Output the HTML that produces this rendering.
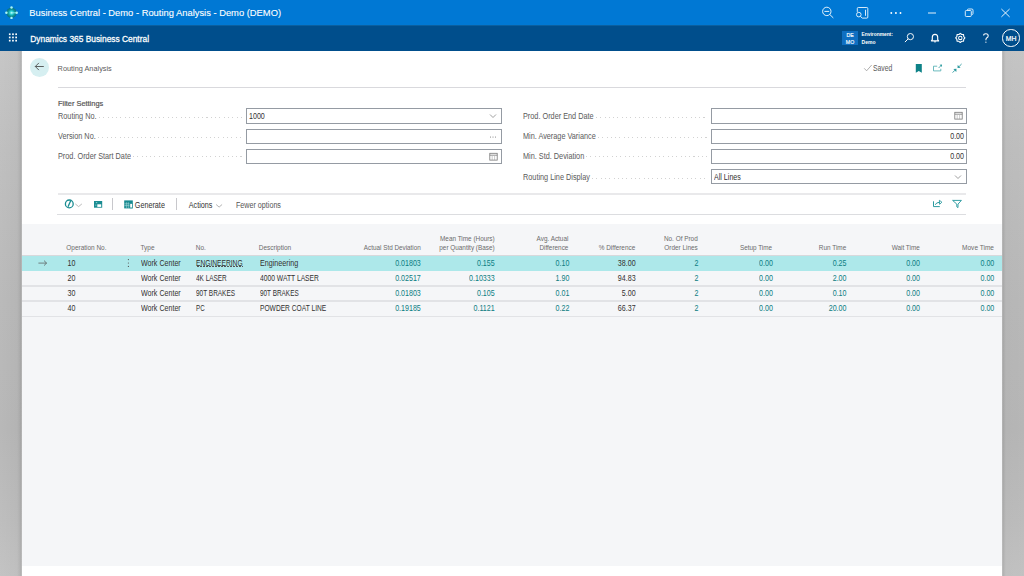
<!DOCTYPE html>
<html><head><meta charset="utf-8">
<style>
*{box-sizing:border-box;margin:0;padding:0}
html,body{width:1024px;height:576px;overflow:hidden;background:#fff;font-family:"Liberation Sans",sans-serif}
.a{position:absolute;white-space:nowrap}
#title{left:0;top:0;width:1024px;height:25px;background:#0078d4}
#nav{left:0;top:25px;width:1024px;height:26px;background:linear-gradient(#0b5f9f 0,#0b5f9f 1px,#004e8c 1px)}
#lm{left:0;top:51px;width:22px;height:525px;background:linear-gradient(to right,rgba(255,255,255,0.06) 0,rgba(255,255,255,0) 17px,rgba(0,0,0,0.06) 20px,rgba(0,0,0,0.1) 21.3px,rgba(255,255,255,0.5) 22px),linear-gradient(#c3c3c3 0,#bcbcbc 100px,#b6b6b6 250px,#b4b4b4 380px,#bababa 470px,#c0c0c0 525px)}
#rm{left:1002px;top:51px;width:22px;height:525px;background:linear-gradient(to right,rgba(255,255,255,0.5) 0,rgba(0,0,0,0.1) 0.7px,rgba(0,0,0,0.05) 2px,rgba(0,0,0,0) 4px,rgba(255,255,255,0.03) 22px),linear-gradient(#c3c3c3 0,#bcbcbc 100px,#b6b6b6 250px,#b4b4b4 380px,#bababa 470px,#c0c0c0 525px)}
#list{left:22px;top:224px;width:980px;height:342px;background:#f5f6f8}
.tt{color:#fff;font-size:9.37px}
.lbl{font-size:7.3px;color:#505050;line-height:10px}
.dl{height:1px;background:repeating-linear-gradient(to right,#d2d2d2 0 1px,transparent 1px 4.3px)}
.inp{border:1px solid #959ba3;background:#fff;height:15px}
.hd{font-size:6.4px;color:#6b6b6b;line-height:9.3px}
.cell{font-size:7.1px;color:#323130;line-height:10px}
.r{text-align:right}
.row{left:22px;width:980px;border-bottom:1px solid #e2e3e6}
.ic{position:absolute}
</style></head><body>
<div id="title" class="a"></div><div id="nav" class="a"></div>
<div id="lm" class="a"></div><div id="rm" class="a"></div>
<div class="a" style="top:8px;font-size:9.37px;color:#fff;line-height:10px;left:29.30px;-webkit-text-stroke:0.1px #fff;">Business Central - Demo - Routing Analysis - Demo (DEMO)</div>
<div class="a" style="top:34px;font-size:8.4px;color:#fff;line-height:10px;left:30.30px;transform-origin:0 8px;transform:scale(1.0000,1.1);-webkit-text-stroke:0.25px #fff;">Dynamics 365 Business Central</div>
<div class="a" style="left:30px;top:58px;width:19px;height:19px;border-radius:50%;background:#d6eff1"></div>
<div class="a" style="top:64px;font-size:7.33px;color:#5a5a5a;line-height:10px;left:57.60px;transform-origin:0 7px;transform:scale(1.0000,1.1);">Routing Analysis</div>
<div class="a" style="left:57.6px;top:87px;width:908.4px;height:1px;background:#d9d9dd"></div>
<div class="a" style="top:64px;font-size:6.81px;color:#5a5a5a;line-height:10px;left:873.00px;transform-origin:0 7px;transform:scale(1.0000,1.25);">Saved</div>
<div class="a" style="top:99px;font-size:7.4px;color:#555;line-height:10px;left:58.00px;-webkit-text-stroke:0.2px #555;">Filter Settings</div>
<div class="a" style="top:112px;font-size:7.3px;color:#5a5a5a;line-height:10px;left:58.00px;transform-origin:0 7px;transform:scale(1.0000,1.12);">Routing No.</div>
<div class="a dl" style="left:98.5px;top:116.5px;width:143.5px"></div>
<div class="a inp" style="left:246px;top:108px;width:256px;height:16px"></div>
<div class="a" style="top:112px;font-size:7.1px;color:#323130;line-height:10px;left:249.00px;transform-origin:0 7px;transform:scale(1.0000,1.15);">1000</div>
<svg class="ic" style="left:489px;top:113px" width="8" height="6" viewBox="0 0 8 6"><path d="M1 1.5 L4 4.5 L7 1.5" fill="none" stroke="#777" stroke-width="0.7"/></svg>
<div class="a" style="top:132px;font-size:7.3px;color:#5a5a5a;line-height:10px;left:58.00px;transform-origin:0 7px;transform:scale(1.0000,1.12);">Version No.</div>
<div class="a dl" style="left:97.7px;top:136.5px;width:144.3px"></div>
<div class="a inp" style="left:246px;top:128.8px;width:256px;height:15px"></div>
<svg class="ic" style="left:489px;top:134.8px" width="8" height="4" viewBox="0 0 8 4"><circle cx="1.5" cy="2" r="0.5" fill="#666"/><circle cx="4" cy="2" r="0.5" fill="#666"/><circle cx="6.5" cy="2" r="0.5" fill="#666"/></svg>
<div class="a" style="top:152px;font-size:7.3px;color:#5a5a5a;line-height:10px;left:58.00px;transform-origin:0 7px;transform:scale(1.0000,1.12);">Prod. Order Start Date</div>
<div class="a dl" style="left:133.0px;top:156.3px;width:109.0px"></div>
<div class="a inp" style="left:246px;top:149px;width:256px;height:15px"></div>
<svg class="ic" style="left:489px;top:152px" width="9" height="9" viewBox="0 0 9 9"><rect x="0.8" y="1.3" width="7.4" height="6.8" fill="none" stroke="#777" stroke-width="0.8"/><line x1="0.8" y1="3.2" x2="8.2" y2="3.2" stroke="#777" stroke-width="0.8"/><line x1="3.2" y1="4" x2="3.2" y2="8" stroke="#999" stroke-width="0.5"/><line x1="5.6" y1="4" x2="5.6" y2="8" stroke="#999" stroke-width="0.5"/></svg>
<div class="a" style="top:112px;font-size:7.3px;color:#5a5a5a;line-height:10px;left:523.00px;transform-origin:0 7px;transform:scale(1.0000,1.12);">Prod. Order End Date</div>
<div class="a dl" style="left:595.6px;top:116.5px;width:111.4px"></div>
<div class="a inp" style="left:711px;top:108px;width:256px;height:16px"></div>
<svg class="ic" style="left:954px;top:111px" width="9" height="9" viewBox="0 0 9 9"><rect x="0.8" y="1.3" width="7.4" height="6.8" fill="none" stroke="#777" stroke-width="0.8"/><line x1="0.8" y1="3.2" x2="8.2" y2="3.2" stroke="#777" stroke-width="0.8"/><line x1="3.2" y1="4" x2="3.2" y2="8" stroke="#999" stroke-width="0.5"/><line x1="5.6" y1="4" x2="5.6" y2="8" stroke="#999" stroke-width="0.5"/></svg>
<div class="a" style="top:132px;font-size:7.3px;color:#5a5a5a;line-height:10px;left:523.00px;transform-origin:0 7px;transform:scale(1.0000,1.12);">Min. Average Variance</div>
<div class="a dl" style="left:597.8px;top:136.5px;width:109.2px"></div>
<div class="a inp" style="left:711px;top:128.8px;width:256px;height:15px"></div>
<div class="a" style="top:132px;font-size:7.1px;color:#323130;line-height:10px;right:60.00px;text-align:right;transform-origin:100% 7px;transform:scale(1.0000,1.15);">0.00</div>
<div class="a" style="top:152px;font-size:7.3px;color:#5a5a5a;line-height:10px;left:523.00px;transform-origin:0 7px;transform:scale(1.0000,1.12);">Min. Std. Deviation</div>
<div class="a dl" style="left:586.3px;top:156.3px;width:120.7px"></div>
<div class="a inp" style="left:711px;top:149px;width:256px;height:15px"></div>
<div class="a" style="top:152px;font-size:7.1px;color:#323130;line-height:10px;right:60.00px;text-align:right;transform-origin:100% 7px;transform:scale(1.0000,1.15);">0.00</div>
<div class="a" style="top:173px;font-size:7.3px;color:#5a5a5a;line-height:10px;left:523.00px;transform-origin:0 7px;transform:scale(1.0000,1.12);">Routing Line Display</div>
<div class="a dl" style="left:592.0px;top:177.5px;width:115.0px"></div>
<div class="a inp" style="left:711px;top:169px;width:256px;height:15px"></div>
<div class="a" style="top:173px;font-size:7.1px;color:#323130;line-height:10px;left:714.00px;transform-origin:0 7px;transform:scale(1.0000,1.15);">All Lines</div>
<svg class="ic" style="left:954px;top:174px" width="8" height="6" viewBox="0 0 8 6"><path d="M1 1.5 L4 4.5 L7 1.5" fill="none" stroke="#777" stroke-width="0.7"/></svg>
<div class="a" style="left:57.6px;top:193px;width:908.4px;height:2px;background:#e9e9eb"></div>
<div class="a" style="left:57.4px;top:214px;width:908.6px;height:1px;background:#dcdde0"></div>
<div class="a" style="left:112px;top:198px;width:1px;height:12px;background:#c8c8cc"></div>
<div class="a" style="left:176px;top:198px;width:1px;height:12px;background:#c8c8cc"></div>
<div class="a" style="top:201px;font-size:7.22px;color:#323130;line-height:10px;left:134.80px;transform-origin:0 7px;transform:scale(1.0000,1.15);">Generate</div>
<div class="a" style="top:201px;font-size:7.2px;color:#323130;line-height:10px;left:188.80px;transform-origin:0 7px;transform:scale(1.0000,1.15);">Actions</div>
<div class="a" style="top:201px;font-size:7.16px;color:#555;line-height:10px;left:236.00px;transform-origin:0 7px;transform:scale(1.0000,1.15);">Fewer options</div>
<div class="a" style="left:4.5px;top:5.3px;width:13px;height:13px"><svg width="13" height="13" viewBox="0 0 13 13"><defs><radialGradient id="lg" cx="50%" cy="50%" r="50%"><stop offset="0" stop-color="#c8ffff"/><stop offset="0.3" stop-color="#30d6da"/><stop offset="0.6" stop-color="#0f9aa0"/><stop offset="1" stop-color="#0b6f76"/></radialGradient></defs><circle cx="6.5" cy="6.8" r="5.1" fill="url(#lg)"/><line x1="6.5" y1="6.8" x2="11.5" y2="6.8" stroke="#a8f5f5" stroke-width="0.7"/><circle cx="6.5" cy="1.6" r="1.25" fill="#a8f5f5"/><circle cx="6.5" cy="12" r="1.25" fill="#a8f5f5"/><circle cx="1.4" cy="6.8" r="1.25" fill="#a8f5f5"/><circle cx="11.7" cy="6.8" r="1.25" fill="#a8f5f5"/></svg></div>
<svg class="ic" style="left:818px;top:4px" width="18" height="17" viewBox="818 4 18 17"><circle cx="826.8" cy="11.4" r="4.2" fill="none" stroke="#fff" stroke-width="0.9"/><line x1="824.4" y1="11.4" x2="829.2" y2="11.4" stroke="#fff" stroke-width="0.9"/><line x1="829.9" y1="14.6" x2="833.3" y2="17.9" stroke="#fff" stroke-width="0.9"/></svg>
<svg class="ic" style="left:852px;top:4px" width="20" height="18" viewBox="852 4 20 18"><path d="M857.3 11.9 V8.5 Q857.3 7.5 858.3 7.5 H866.8 Q867.8 7.5 867.8 8.5 V17.1 Q867.8 18.1 866.8 18.1 H862.3" fill="none" stroke="#fff" stroke-width="0.85"/><line x1="865.5" y1="9.8" x2="865.5" y2="15.8" stroke="#fff" stroke-width="0.85"/><circle cx="858.8" cy="14.6" r="2.3" fill="none" stroke="#fff" stroke-width="0.85"/><line x1="860.5" y1="16.3" x2="862.2" y2="18.2" stroke="#fff" stroke-width="0.85"/></svg>
<svg class="ic" style="left:888px;top:10px" width="16" height="6" viewBox="888 10 16 6"><circle cx="891.3" cy="13" r="0.95" fill="#fff"/><circle cx="895.9" cy="13" r="0.95" fill="#fff"/><circle cx="900.5" cy="13" r="0.95" fill="#fff"/></svg>
<svg class="ic" style="left:926px;top:10px" width="12" height="6" viewBox="926 10 12 6"><line x1="928" y1="13" x2="936" y2="13" stroke="#fff" stroke-width="0.9"/></svg>
<svg class="ic" style="left:962px;top:6px" width="14" height="14" viewBox="962 6 14 14"><path d="M967.2 9.9 Q967.6 9 968.6 9 H971.8 Q973 9 973 10.2 V13.5 Q973 14.4 972.2 14.7" fill="none" stroke="#fff" stroke-width="0.85"/><rect x="965.3" y="10.5" width="6" height="6" rx="1" fill="none" stroke="#fff" stroke-width="0.85"/></svg>
<svg class="ic" style="left:998px;top:6px" width="14" height="14" viewBox="998 6 14 14"><path d="M1001.4 9 L1009.6 16.9 M1009.6 9 L1001.4 16.9" stroke="#fff" stroke-width="0.9"/></svg>
<svg class="ic" style="left:6px;top:30px" width="16" height="16" viewBox="6 30 16 16"><rect x="8.9" y="33.4" width="1.7" height="1.7" fill="#fff"/><rect x="8.9" y="36.6" width="1.7" height="1.7" fill="#fff"/><rect x="8.9" y="39.8" width="1.7" height="1.7" fill="#fff"/><rect x="12.1" y="33.4" width="1.7" height="1.7" fill="#fff"/><rect x="12.1" y="36.6" width="1.7" height="1.7" fill="#fff"/><rect x="12.1" y="39.8" width="1.7" height="1.7" fill="#fff"/><rect x="15.3" y="33.4" width="1.7" height="1.7" fill="#fff"/><rect x="15.3" y="36.6" width="1.7" height="1.7" fill="#fff"/><rect x="15.3" y="39.8" width="1.7" height="1.7" fill="#fff"/></svg>
<div class="a" style="left:842.2px;top:30.9px;width:15.5px;height:14.6px;background:#0f6fc2"></div>
<div class="a" style="top:32px;font-size:5.2px;color:#fff;line-height:6px;left:850.00px;transform-origin:0 5px;transform:translateX(-50%) scale(1.0000,1.1);-webkit-text-stroke:0.15px #fff;">DE</div>
<div class="a" style="top:39px;font-size:5.2px;color:#fff;line-height:6px;left:850.00px;transform-origin:0 5px;transform:translateX(-50%) scale(1.0000,1.1);-webkit-text-stroke:0.15px #fff;">MO</div>
<div class="a" style="top:32px;font-size:4.85px;color:#fff;line-height:6px;font-weight:bold;left:861.60px;">Environment:</div>
<div class="a" style="top:39px;font-size:5.04px;color:#fff;line-height:6px;font-weight:bold;left:861.60px;">Demo</div>
<svg class="ic" style="left:902px;top:30px" width="14" height="14" viewBox="902 30 14 14"><circle cx="910.4" cy="36.6" r="3.1" fill="none" stroke="#fff" stroke-width="0.95"/><line x1="908.2" y1="38.8" x2="904.9" y2="42.1" stroke="#fff" stroke-width="1"/></svg>
<svg class="ic" style="left:928px;top:31px" width="14" height="14" viewBox="928 31 14 14"><path d="M931.4 40.9 H938.6 L937.7 39.6 V37.3 Q937.7 34.3 935 34.3 Q932.3 34.3 932.3 37.3 V39.6 Z" fill="none" stroke="#fff" stroke-width="1.15" stroke-linejoin="round"/><path d="M934 41.5 Q935 42.8 936 41.5" fill="none" stroke="#fff" stroke-width="0.9"/></svg>
<svg class="ic" style="left:954px;top:31px" width="14" height="14" viewBox="954 31 14 14"><polygon points="964.90,37.90 963.72,39.32 963.55,41.15 961.72,41.32 960.30,42.50 958.88,41.32 957.05,41.15 956.88,39.32 955.70,37.90 956.88,36.48 957.05,34.65 958.88,34.48 960.30,33.30 961.72,34.48 963.55,34.65 963.72,36.48" fill="none" stroke="#fff" stroke-width="1.1" stroke-linejoin="round"/><circle cx="960.3" cy="37.9" r="1.7" fill="none" stroke="#fff" stroke-width="1.05"/></svg>
<svg class="ic" style="left:980px;top:31px" width="12" height="14" viewBox="980 31 12 14"><path d="M983.6 35.6 Q983.6 33.7 985.9 33.7 Q988.2 33.7 988.2 35.7 Q988.2 37 986.9 37.8 Q985.9 38.4 985.9 39.8 V40.3" fill="none" stroke="#fff" stroke-width="1.05"/><circle cx="985.9" cy="42.2" r="0.6" fill="#fff"/></svg>
<div class="a" style="left:1002.4px;top:29.2px;width:17.4px;height:17.4px;border:1px solid #fff;border-radius:50%"></div>
<div class="a" style="top:35px;font-size:6.8px;color:#fff;line-height:8px;left:1011.10px;transform-origin:0 6px;transform:translateX(-50%) scale(1.0000,1.05);-webkit-text-stroke:0.2px #fff;">MH</div>
<svg class="ic" style="left:33px;top:60px" width="13" height="13" viewBox="33 60 13 13"><path d="M43.8 66.5 H35.3 M38.9 62.9 L35.3 66.5 L38.9 70.1" fill="none" stroke="#444" stroke-width="0.85"/></svg>
<svg class="ic" style="left:862px;top:63px" width="12" height="10" viewBox="862 63 12 10"><path d="M864.2 68.3 L866.6 70.8 L871.7 65.0" fill="none" stroke="#999" stroke-width="0.8"/></svg>
<svg class="ic" style="left:914px;top:62px" width="10" height="12" viewBox="914 62 10 12"><path d="M915.8 64 H921.8 V72.7 L918.8 71.0 L915.8 72.7 Z" fill="#0e8288"/></svg>
<svg class="ic" style="left:931px;top:62px" width="13" height="12" viewBox="931 62 13 12"><path d="M937.2 66.2 H933.5 V70.9 H940.8 V68.8" fill="none" stroke="#48a9ad" stroke-width="0.8"/><path d="M938.6 68.0 L941.3 65.3" fill="none" stroke="#2a9a9f" stroke-width="0.8"/><path d="M939.6 64.8 L942 64.6 L941.8 67 Z" fill="#2a9a9f"/></svg>
<svg class="ic" style="left:950px;top:62px" width="14" height="13" viewBox="950 62 14 13"><path d="M961.6 64 L959.2 66.4" fill="none" stroke="#2a9a9f" stroke-width="0.9"/><path d="M957.5 68.0 L957.7 64.9 L960.6 67.8 Z" fill="#2a9a9f"/><path d="M952.6 72.6 L955.0 70.2" fill="none" stroke="#2a9a9f" stroke-width="0.9"/><path d="M956.5 68.8 L956.3 71.9 L953.4 69.0 Z" fill="#2a9a9f"/></svg>
<svg class="ic" style="left:63px;top:198px" width="12" height="12" viewBox="63 198 12 12"><circle cx="69.3" cy="203.9" r="3.9" fill="none" stroke="#1a8c92" stroke-width="1.3"/><path d="M68.0 206.8 L70.6 201.0" stroke="#1a8c92" stroke-width="1.3"/></svg>
<svg class="ic" style="left:74px;top:201px" width="9" height="7" viewBox="74 201 9 7"><path d="M75.3 203.9 L78.6 206.6 L81.9 203.9" fill="none" stroke="#aaa" stroke-width="0.8"/></svg>
<svg class="ic" style="left:92px;top:199px" width="12" height="11" viewBox="92 199 12 11"><rect x="94" y="201" width="8.2" height="6.7" fill="#1a8c92"/><rect x="95.9" y="202.1" width="1.3" height="1" fill="#8fcfd2"/><rect x="97.3" y="204.3" width="3.9" height="2.6" fill="#fff"/><rect x="95.2" y="204.4" width="1.2" height="1.6" fill="#5fb5b9"/></svg>
<svg class="ic" style="left:122px;top:198px" width="13" height="12" viewBox="122 198 13 12"><rect x="124.2" y="200.4" width="8.6" height="8.0" fill="#178a90"/><path d="M126.4 202.2 V208.2 M128.3 202.2 V208.2 M124.4 203.8 H129.8 M124.4 205.6 H129.8" stroke="#bfe3e4" stroke-width="0.5"/><rect x="129.9" y="203.6" width="2.5" height="4.3" fill="#fff" stroke="#178a90" stroke-width="0.6"/></svg>
<svg class="ic" style="left:214px;top:203px" width="9" height="7" viewBox="214 203 9 7"><path d="M216.1 204.5 L219.1 207.1 L222.1 204.5" fill="none" stroke="#999" stroke-width="0.75"/></svg>
<svg class="ic" style="left:930px;top:197px" width="14" height="12" viewBox="930 197 14 12"><path d="M933.5 201.3 V206.6 H939.8" fill="none" stroke="#2a9a9f" stroke-width="1"/><path d="M935.3 204.8 Q936 202.5 939.4 202.3" fill="none" stroke="#2a9a9f" stroke-width="1"/><path d="M939.4 200.3 L941.9 202.2 L939.6 204.3 Z" fill="none" stroke="#2a9a9f" stroke-width="0.9" stroke-linejoin="round"/></svg>
<svg class="ic" style="left:951px;top:197px" width="13" height="13" viewBox="951 197 13 13"><path d="M952.6 200.4 H961.4 L958.0 204.1 V207.6 L956.8 206.8 V204.1 Z" fill="none" stroke="#2a9a9f" stroke-width="0.95" stroke-linejoin="round"/></svg>
<div id="list" class="a"></div>
<div class="a" style="top:243px;font-size:6.46px;color:#6b6b6b;line-height:10px;left:66.30px;">Operation No.</div>
<div class="a" style="top:243px;font-size:6.46px;color:#6b6b6b;line-height:10px;left:140.50px;">Type</div>
<div class="a" style="top:243px;font-size:6.46px;color:#6b6b6b;line-height:10px;left:195.80px;">No.</div>
<div class="a" style="top:243px;font-size:6.46px;color:#6b6b6b;line-height:10px;left:258.80px;">Description</div>
<div class="a" style="top:243px;font-size:6.34px;color:#6b6b6b;line-height:10px;right:603.20px;text-align:right;">Actual Std Deviation</div>
<div class="a" style="top:234px;font-size:6.4px;color:#6b6b6b;line-height:10px;right:529.30px;text-align:right;">Mean Time (Hours)</div>
<div class="a" style="top:243px;font-size:6.4px;color:#6b6b6b;line-height:10px;right:529.30px;text-align:right;">per Quantity (Base)</div>
<div class="a" style="top:234px;font-size:6.4px;color:#6b6b6b;line-height:10px;right:455.60px;text-align:right;">Avg. Actual</div>
<div class="a" style="top:243px;font-size:6.4px;color:#6b6b6b;line-height:10px;right:455.60px;text-align:right;">Difference</div>
<div class="a" style="top:243px;font-size:6.4px;color:#6b6b6b;line-height:10px;right:388.80px;text-align:right;">% Difference</div>
<div class="a" style="top:234px;font-size:6.4px;color:#6b6b6b;line-height:10px;right:326.30px;text-align:right;">No. Of Prod</div>
<div class="a" style="top:243px;font-size:6.4px;color:#6b6b6b;line-height:10px;right:326.30px;text-align:right;">Order Lines</div>
<div class="a" style="top:243px;font-size:6.35px;color:#6b6b6b;line-height:10px;right:252.00px;text-align:right;">Setup Time</div>
<div class="a" style="top:243px;font-size:6.4px;color:#6b6b6b;line-height:10px;right:177.80px;text-align:right;">Run Time</div>
<div class="a" style="top:243px;font-size:6.4px;color:#6b6b6b;line-height:10px;right:104.20px;text-align:right;">Wait Time</div>
<div class="a" style="top:243px;font-size:6.54px;color:#6b6b6b;line-height:10px;right:30.00px;text-align:right;">Move Time</div>
<div class="a" style="left:22px;top:255.5px;width:980px;height:15.2px;background:#ade8ea"></div>
<div class="a" style="top:259px;font-size:7.1px;color:#323130;line-height:10px;left:67.50px;transform-origin:0 7px;transform:scale(1.0000,1.15);">10</div>
<div class="a" style="top:259px;font-size:7.1px;color:#323130;line-height:10px;left:141.00px;transform-origin:0 7px;transform:scale(1.0000,1.15);">Work Center</div>
<div class="a" style="top:259px;font-size:7.1px;color:#323130;line-height:10px;left:196.10px;transform-origin:0 7px;transform:scale(0.9375,1.15);">ENGINEERING</div>
<div class="a" style="left:196.5px;top:266px;width:46px;height:1px;background:repeating-linear-gradient(to right,#555 0 1.5px,transparent 1.5px 3px)"></div>
<div class="a" style="top:259px;font-size:7.1px;color:#323130;line-height:10px;left:259.70px;transform-origin:0 7px;transform:scale(1.0107,1.15);">Engineering</div>
<div class="a" style="top:259px;font-size:7.1px;color:#0c7d82;line-height:10px;right:603.20px;text-align:right;transform-origin:100% 7px;transform:scale(1.0000,1.15);">0.01803</div>
<div class="a" style="top:259px;font-size:7.1px;color:#0c7d82;line-height:10px;right:529.30px;text-align:right;transform-origin:100% 7px;transform:scale(1.0000,1.15);">0.155</div>
<div class="a" style="top:259px;font-size:7.1px;color:#0c7d82;line-height:10px;right:454.60px;text-align:right;transform-origin:100% 7px;transform:scale(1.0000,1.15);">0.10</div>
<div class="a" style="top:259px;font-size:7.1px;color:#323130;line-height:10px;right:388.40px;text-align:right;transform-origin:100% 7px;transform:scale(1.0000,1.15);">38.00</div>
<div class="a" style="top:259px;font-size:7.1px;color:#0c7d82;line-height:10px;right:325.50px;text-align:right;transform-origin:100% 7px;transform:scale(1.0000,1.15);">2</div>
<div class="a" style="top:259px;font-size:7.1px;color:#0c7d82;line-height:10px;right:251.10px;text-align:right;transform-origin:100% 7px;transform:scale(1.0000,1.15);">0.00</div>
<div class="a" style="top:259px;font-size:7.1px;color:#0c7d82;line-height:10px;right:177.50px;text-align:right;transform-origin:100% 7px;transform:scale(1.0000,1.15);">0.25</div>
<div class="a" style="top:259px;font-size:7.1px;color:#0c7d82;line-height:10px;right:104.00px;text-align:right;transform-origin:100% 7px;transform:scale(1.0000,1.15);">0.00</div>
<div class="a" style="top:259px;font-size:7.1px;color:#0c7d82;line-height:10px;right:29.70px;text-align:right;transform-origin:100% 7px;transform:scale(1.0000,1.15);">0.00</div>
<div class="a" style="left:22px;top:285.2px;width:980px;height:1.5px;background:#e2e3e6"></div>
<div class="a" style="top:274px;font-size:7.1px;color:#323130;line-height:10px;left:67.50px;transform-origin:0 7px;transform:scale(1.0000,1.15);">20</div>
<div class="a" style="top:274px;font-size:7.1px;color:#323130;line-height:10px;left:141.00px;transform-origin:0 7px;transform:scale(1.0000,1.15);">Work Center</div>
<div class="a" style="top:274px;font-size:7.1px;color:#323130;line-height:10px;left:196.10px;transform-origin:0 7px;transform:scale(0.9075,1.15);">4K LASER</div>
<div class="a" style="top:274px;font-size:7.1px;color:#323130;line-height:10px;left:259.70px;transform-origin:0 7px;transform:scale(0.9483,1.15);">4000 WATT LASER</div>
<div class="a" style="top:274px;font-size:7.1px;color:#0c7d82;line-height:10px;right:603.20px;text-align:right;transform-origin:100% 7px;transform:scale(1.0000,1.15);">0.02517</div>
<div class="a" style="top:274px;font-size:7.1px;color:#0c7d82;line-height:10px;right:529.30px;text-align:right;transform-origin:100% 7px;transform:scale(1.0000,1.15);">0.10333</div>
<div class="a" style="top:274px;font-size:7.1px;color:#0c7d82;line-height:10px;right:454.60px;text-align:right;transform-origin:100% 7px;transform:scale(1.0000,1.15);">1.90</div>
<div class="a" style="top:274px;font-size:7.1px;color:#323130;line-height:10px;right:388.40px;text-align:right;transform-origin:100% 7px;transform:scale(1.0000,1.15);">94.83</div>
<div class="a" style="top:274px;font-size:7.1px;color:#0c7d82;line-height:10px;right:325.50px;text-align:right;transform-origin:100% 7px;transform:scale(1.0000,1.15);">2</div>
<div class="a" style="top:274px;font-size:7.1px;color:#0c7d82;line-height:10px;right:251.10px;text-align:right;transform-origin:100% 7px;transform:scale(1.0000,1.15);">0.00</div>
<div class="a" style="top:274px;font-size:7.1px;color:#0c7d82;line-height:10px;right:177.50px;text-align:right;transform-origin:100% 7px;transform:scale(1.0000,1.15);">2.00</div>
<div class="a" style="top:274px;font-size:7.1px;color:#0c7d82;line-height:10px;right:104.00px;text-align:right;transform-origin:100% 7px;transform:scale(1.0000,1.15);">0.00</div>
<div class="a" style="top:274px;font-size:7.1px;color:#0c7d82;line-height:10px;right:29.70px;text-align:right;transform-origin:100% 7px;transform:scale(1.0000,1.15);">0.00</div>
<div class="a" style="left:22px;top:300.4px;width:980px;height:1.5px;background:#e2e3e6"></div>
<div class="a" style="top:289px;font-size:7.1px;color:#323130;line-height:10px;left:67.50px;transform-origin:0 7px;transform:scale(1.0000,1.15);">30</div>
<div class="a" style="top:289px;font-size:7.1px;color:#323130;line-height:10px;left:141.00px;transform-origin:0 7px;transform:scale(1.0000,1.15);">Work Center</div>
<div class="a" style="top:289px;font-size:7.1px;color:#323130;line-height:10px;left:196.10px;transform-origin:0 7px;transform:scale(0.9118,1.15);">90T BRAKES</div>
<div class="a" style="top:289px;font-size:7.1px;color:#323130;line-height:10px;left:259.70px;transform-origin:0 7px;transform:scale(0.9024,1.15);">90T BRAKES</div>
<div class="a" style="top:289px;font-size:7.1px;color:#0c7d82;line-height:10px;right:603.20px;text-align:right;transform-origin:100% 7px;transform:scale(1.0000,1.15);">0.01803</div>
<div class="a" style="top:289px;font-size:7.1px;color:#0c7d82;line-height:10px;right:529.30px;text-align:right;transform-origin:100% 7px;transform:scale(1.0000,1.15);">0.105</div>
<div class="a" style="top:289px;font-size:7.1px;color:#0c7d82;line-height:10px;right:454.60px;text-align:right;transform-origin:100% 7px;transform:scale(1.0000,1.15);">0.01</div>
<div class="a" style="top:289px;font-size:7.1px;color:#323130;line-height:10px;right:388.40px;text-align:right;transform-origin:100% 7px;transform:scale(1.0000,1.15);">5.00</div>
<div class="a" style="top:289px;font-size:7.1px;color:#0c7d82;line-height:10px;right:325.50px;text-align:right;transform-origin:100% 7px;transform:scale(1.0000,1.15);">2</div>
<div class="a" style="top:289px;font-size:7.1px;color:#0c7d82;line-height:10px;right:251.10px;text-align:right;transform-origin:100% 7px;transform:scale(1.0000,1.15);">0.00</div>
<div class="a" style="top:289px;font-size:7.1px;color:#0c7d82;line-height:10px;right:177.50px;text-align:right;transform-origin:100% 7px;transform:scale(1.0000,1.15);">0.10</div>
<div class="a" style="top:289px;font-size:7.1px;color:#0c7d82;line-height:10px;right:104.00px;text-align:right;transform-origin:100% 7px;transform:scale(1.0000,1.15);">0.00</div>
<div class="a" style="top:289px;font-size:7.1px;color:#0c7d82;line-height:10px;right:29.70px;text-align:right;transform-origin:100% 7px;transform:scale(1.0000,1.15);">0.00</div>
<div class="a" style="left:22px;top:315.7px;width:980px;height:1.5px;background:#e2e3e6"></div>
<div class="a" style="top:304px;font-size:7.1px;color:#323130;line-height:10px;left:67.50px;transform-origin:0 7px;transform:scale(1.0000,1.15);">40</div>
<div class="a" style="top:304px;font-size:7.1px;color:#323130;line-height:10px;left:141.00px;transform-origin:0 7px;transform:scale(1.0000,1.15);">Work Center</div>
<div class="a" style="top:304px;font-size:7.1px;color:#323130;line-height:10px;left:196.10px;transform-origin:0 7px;transform:scale(0.8720,1.15);">PC</div>
<div class="a" style="top:304px;font-size:7.1px;color:#323130;line-height:10px;left:259.70px;transform-origin:0 7px;transform:scale(0.9372,1.15);">POWDER COAT LINE</div>
<div class="a" style="top:304px;font-size:7.1px;color:#0c7d82;line-height:10px;right:603.20px;text-align:right;transform-origin:100% 7px;transform:scale(1.0000,1.15);">0.19185</div>
<div class="a" style="top:304px;font-size:7.1px;color:#0c7d82;line-height:10px;right:529.30px;text-align:right;transform-origin:100% 7px;transform:scale(1.0000,1.15);">0.1121</div>
<div class="a" style="top:304px;font-size:7.1px;color:#0c7d82;line-height:10px;right:454.60px;text-align:right;transform-origin:100% 7px;transform:scale(1.0000,1.15);">0.22</div>
<div class="a" style="top:304px;font-size:7.1px;color:#323130;line-height:10px;right:388.40px;text-align:right;transform-origin:100% 7px;transform:scale(1.0000,1.15);">66.37</div>
<div class="a" style="top:304px;font-size:7.1px;color:#0c7d82;line-height:10px;right:325.50px;text-align:right;transform-origin:100% 7px;transform:scale(1.0000,1.15);">2</div>
<div class="a" style="top:304px;font-size:7.1px;color:#0c7d82;line-height:10px;right:251.10px;text-align:right;transform-origin:100% 7px;transform:scale(1.0000,1.15);">0.00</div>
<div class="a" style="top:304px;font-size:7.1px;color:#0c7d82;line-height:10px;right:177.50px;text-align:right;transform-origin:100% 7px;transform:scale(1.0000,1.15);">20.00</div>
<div class="a" style="top:304px;font-size:7.1px;color:#0c7d82;line-height:10px;right:104.00px;text-align:right;transform-origin:100% 7px;transform:scale(1.0000,1.15);">0.00</div>
<div class="a" style="top:304px;font-size:7.1px;color:#0c7d82;line-height:10px;right:29.70px;text-align:right;transform-origin:100% 7px;transform:scale(1.0000,1.15);">0.00</div>
<div class="a" style="left:22px;top:255px;width:980px;height:1px;background:#d8d9dc"></div>
<svg class="ic" style="left:37px;top:258px" width="12" height="10" viewBox="37 258 12 10"><path d="M38.4 263.1 H46.6 M44 260.6 L46.6 263.1 L44 265.6" fill="none" stroke="#555" stroke-width="0.7"/></svg>
<svg class="ic" style="left:125px;top:257px" width="6" height="12" viewBox="125 257 6 12"><circle cx="128.4" cy="259.6" r="0.6" fill="#555"/><circle cx="128.4" cy="263" r="0.6" fill="#555"/><circle cx="128.4" cy="266.4" r="0.6" fill="#555"/></svg>
</body></html>
